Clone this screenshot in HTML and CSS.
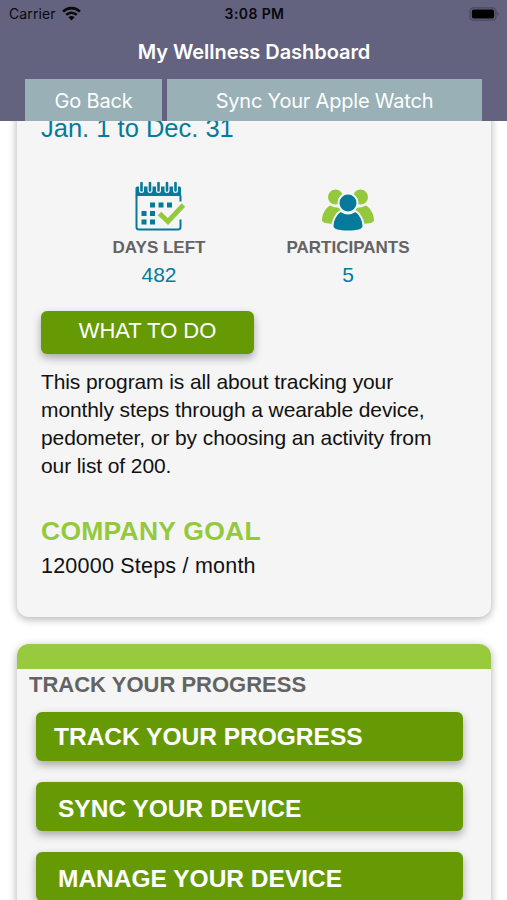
FILE: index.html
```html
<!DOCTYPE html>
<html lang="en">
<head>
  <meta charset="UTF-8" />
  <meta name="viewport" content="width=device-width, initial-scale=1.0"/>
  <title>My Wellness Dashboard</title>
  <link rel="stylesheet" href="styles.css">
</head>
<body>

  <header>
    <div class="status-bar">
      <div class="carrier">
        <span>Carrier</span>
        <svg class="wifi" viewBox="0 0 18 14">
          <path d="M1 5.2a11.4 11.4 0 0 1 16 0" fill="none" stroke="#08080d" stroke-width="2.5"/>
          <path d="M4 8.4a7.1 7.1 0 0 1 10 0" fill="none" stroke="#08080d" stroke-width="2.3"/>
          <path d="M9 13.6L6.1 10.6a4.1 4.1 0 0 1 5.8 0z" fill="#08080d"/>
        </svg>
      </div>
      <div class="time">3:08 PM</div>
      <div class="battery">
        <svg viewBox="0 0 31 14">
          <rect x="1" y=".8" width="26" height="12.4" rx="3.6" fill="none" stroke="#494960" stroke-width="1.3"/>
          <rect x="2.8" y="2.6" width="22.4" height="8.8" rx="2" fill="#000"/>
          <path d="M28.5 5v4.2q1.4-.7 1.4-2.1t-1.4-2.1z" fill="#494960"/>
        </svg>
      </div>
    </div>
    <h1>My Wellness Dashboard</h1>
    <nav>
      <a class="back">Go Back</a>
      <a class="sync">Sync Your Apple Watch</a>
    </nav>
  </header>

  <main>
    <section class="card program">
      <div class="dates">Jan. 1 to Dec. 31</div>

      <div class="stats">
        <div class="stat">
          <svg viewBox="-1.5 -1.5 52 52">
            <path d="M3 5h42q1.5 0 1.5 1.5V14.500H1V6.500Q1 5 3 5z" fill="#057a9b"/>
            <path d="M2 14v31.500Q2 48 4.500 48h39q2.500 0 2.500-2.500V38M46 14v6" fill="none" stroke="#057a9b" stroke-width="2"/>
            <g stroke="#f5f5f5" stroke-width="5" stroke-linecap="round">
              <path d="M7 2v7M15.500 2v7M24 2v7M32.500 2v7M41 2v7"/>
            </g>
            <g stroke="#057a9b" stroke-width="2.600" stroke-linecap="round">
              <path d="M7 1.500v7.500M15.500 1.500v7.500M24 1.500v7.500M32.500 1.500v7.500M41 1.500v7.500"/>
            </g>
            <path d="M15.500 21h5v5h-5zM24 21h5v5h-5zM32.500 21h5v5h-5zM7 29.500h5v5H7zM15.500 29.500h5v5h-5zM7 38h5v5H7zM15.500 38h5v5h-5z" fill="#057a9b"/>
            <path d="M25 32l9 8.500L49 23" fill="none" stroke="#f5f5f5" stroke-width="8"/>
            <path d="M25 32L33.500 40L49 23.500" fill="none" stroke="#95c93d" stroke-width="5"/>
          </svg>
          <div class="stat-label">DAYS LEFT</div>
          <div class="stat-value">482</div>
        </div>
        <div class="stat">
          <svg viewBox="0 -1.5 52 52">
            <g fill="#95c93d">
              <circle cx="13.500" cy="15.500" r="7.500"/>
              <circle cx="38.500" cy="15.500" r="7.500"/>
              <path d="M8 24C3 27 0 33 0 39q0 3 12 3.500L20 26q-6 1-12-2z"/>
              <path d="M44 24c5 3 8 9 8 15q0 3-12 3.500L32 26q6 1 12-2z"/>
            </g>
            <g fill="#057a9b" stroke="#f5f5f5" stroke-width="2">
              <path d="M18.500 29.500q7.500 5 15 0C38 32 41.500 39 41.500 44.500q0 5.500-15.500 5.500T10.500 44.500C10.500 39 14 32 18.500 29.500z"/>
              <circle cx="26" cy="21.500" r="9.500"/>
            </g>
          </svg>
          <div class="stat-label">PARTICIPANTS</div>
          <div class="stat-value">5</div>
        </div>
      </div>

      <button class="what-btn">WHAT TO DO</button>
      <p class="about">This program is all about tracking your<br>monthly steps through a wearable device,<br>pedometer, or by choosing an activity from<br>our list of 200.</p>

      <h2>COMPANY GOAL</h2>
      <div class="goal">120000 Steps / month</div>
    </section>

    <section class="card progress">
      <div class="card-top"></div>
      <h3>TRACK YOUR PROGRESS</h3>
      <div class="actions">
        <button class="action-btn track">TRACK YOUR PROGRESS</button>
        <button class="action-btn">SYNC YOUR DEVICE</button>
        <button class="action-btn">MANAGE YOUR DEVICE</button>
      </div>
    </section>
  </main>

</body>
</html>
```

FILE: styles.css
```css
* {
  box-sizing: border-box;
}
body {
  margin: 0;
  height: 900px;
  display: flex;
  flex-direction: column;
  overflow: hidden;
  background: #fff;
  color: #111;
  font-family: "Liberation Sans", Arial, sans-serif;
}
header {
  flex: none;
  height: 121px;
  background: #636380;
  font-family: Inter, "Liberation Sans", sans-serif;
}
.status-bar {
  display: grid;
  grid-template-columns: 1fr auto 1fr;
  align-items: center;
  height: 27px;
  padding: 0 7px 0 9px;
  color: #08080d;
  font-size: 14px;
}
.carrier {
  display: flex;
  align-items: center;
  gap: 6px;
  letter-spacing: 0.1px;
}
.wifi {
  width: 19px;
  height: 15px;
}
.time {
  font-weight: 600;
  letter-spacing: 0.4px;
}
.battery {
  display: flex;
  justify-content: flex-end;
}
.battery svg {
  width: 31px;
  height: 14px;
}
h1 {
  margin: 0;
  height: 52px;
  padding-left: 1px;
  line-height: 51px;
  text-align: center;
  color: #fff;
  font-size: 20px;
  font-weight: 600;
  letter-spacing: -0.05px;
}
nav {
  display: flex;
  gap: 5px;
  height: 42px;
  padding: 0 25px;
}
nav a {
  background: #98b0b6;
  color: #fff;
  font-size: 20px;
  line-height: 44px;
  text-align: center;
  letter-spacing: -0.2px;
}
.back {
  width: 137px;
}
.sync {
  width: 315px;
}
main {
  flex: 1;
  min-height: 0;
  overflow: hidden;
  padding: 0 16px 0 17px;
}
.card {
  background: #f5f5f5;
  border-radius: 12px;
  box-shadow: 0 2px 9px rgba(0,0,0,0.32);
}
/* the list is scrolled a little way under the header */
.program {
  height: 516px;
  margin-top: -20px;
  padding: 12px 24px 0;
}
.dates {
  height: 30px;
  line-height: 30px;
  color: #057a9b;
  font-size: 25.5px;
}
.stats {
  display: grid;
  grid-template-columns: 236px 142px;
  padding-top: 37px;
}
.stat {
  display: flex;
  flex-direction: column;
  align-items: center;
}
.stat svg {
  width: 52px;
  height: 52px;
}
.stat-label {
  margin-top: 4px;
  line-height: 24px;
  color: #636363;
  font-size: 17px;
  font-weight: bold;
}
.stat-value {
  line-height: 30px;
  color: #057a9b;
  font-size: 21px;
}
button {
  display: block;
  border: none;
  border-radius: 6px;
  background: #669a04;
  color: #fff;
  font-family: inherit;
  box-shadow: 0 4px 8px rgba(0,0,0,0.32);
}
.what-btn {
  width: 213px;
  height: 43px;
  margin-top: 21px;
  padding: 0 0 4px;
  font-size: 22px;
}
.about {
  margin: 14px 0 0;
  font-size: 21px;
  line-height: 28px;
  letter-spacing: -0.1px;
  white-space: nowrap;
}
h2 {
  margin: 35px 0 0;
  color: #95c93d;
  font-size: 26.5px;
  line-height: 32px;
  letter-spacing: 0.25px;
}
.goal {
  margin-top: 5px;
  font-size: 21.5px;
  line-height: 28px;
  letter-spacing: 0.22px;
}
.progress {
  height: 400px;
  margin-top: 27px;
  overflow: hidden;
}
.card-top {
  height: 25px;
  background: #97ca3d;
}
h3 {
  margin: 0;
  padding-left: 12px;
  color: #636363;
  font-size: 22px;
  line-height: 32px;
}
.actions {
  display: flex;
  flex-direction: column;
  gap: 21px;
  padding: 11px 28px 0 19px;
}
.action-btn {
  flex: none;
  height: 49px;
  padding: 5px 0 0 22px;
  font-size: 24.5px;
  font-weight: bold;
  text-align: left;
}
.track {
  padding: 1px 0 0 18px;
}
```
